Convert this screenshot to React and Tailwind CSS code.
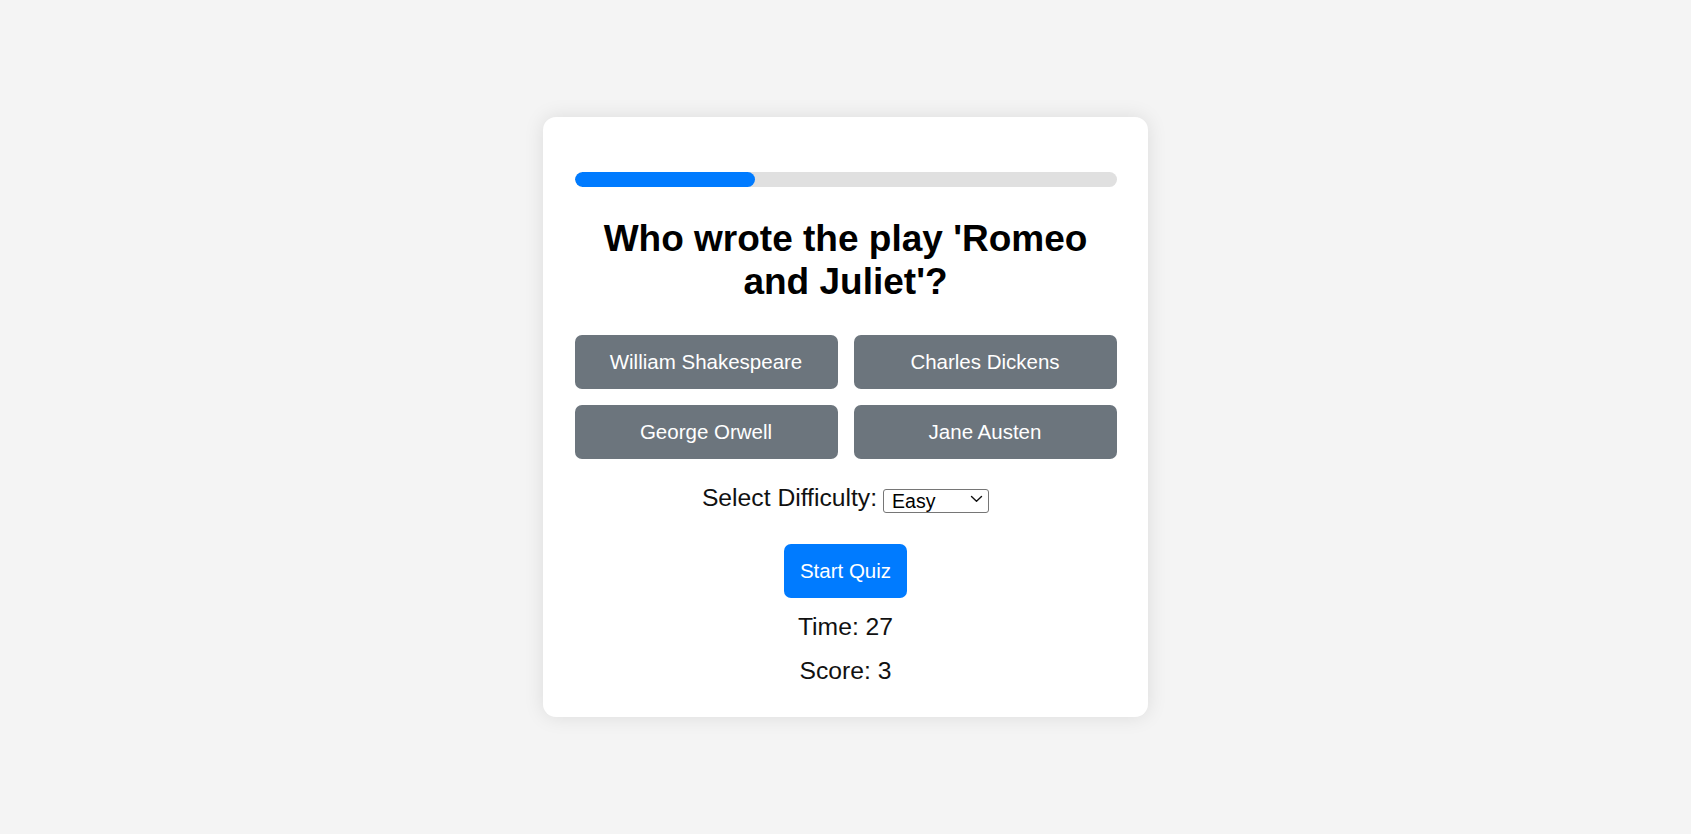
import React from "react";

export default function App() {
  const answers = ["William Shakespeare", "Charles Dickens", "George Orwell", "Jane Austen"];
  return (
    <div
      className="min-h-screen w-full bg-[#f4f4f4] flex items-center justify-center"
      style={{ fontFamily: '"Liberation Sans", Arial, Helvetica, sans-serif' }}
    >
      <div className="w-[605px] bg-white rounded-[13px] shadow-[0_0_20px_rgba(0,0,0,0.1)] px-[31.5px] pt-[55px] pb-[31px] flex flex-col">
        <div className="h-[15px] w-full rounded-full bg-[#e0e0e0] overflow-hidden">
          <div className="h-full w-1/3 rounded-full bg-[#007bff]" />
        </div>
        <h2 className="mt-[31px] text-center text-[37px] leading-[42.5px] font-bold text-black">
          Who wrote the play 'Romeo and Juliet'?
        </h2>
        <div className="mt-[32px] grid grid-cols-2 gap-4">
          {answers.map((a) => (
            <button
              key={a}
              className="h-[54px] rounded-[7px] bg-[#6c757d] text-white text-[20.5px] leading-[24px]"
            >
              {a}
            </button>
          ))}
        </div>
        <div className="mt-[25px] flex items-center justify-center h-[28.4px] text-[24.7px] leading-[28.4px] text-[#111]">
          <span>Select Difficulty:</span>
          <div className="relative ml-[6px] w-[106px] h-[24.5px]">
            <select
              defaultValue="Easy"
              className="appearance-none w-full h-full border border-[#767676] rounded-[3px] bg-white pl-[8px] text-[19.5px] leading-[22px] text-black outline-none"
              style={{ fontFamily: '"Liberation Sans", Arial, sans-serif' }}
            >
              <option>Easy</option>
              <option>Medium</option>
              <option>Hard</option>
            </select>
            <svg
              className="pointer-events-none absolute right-[6px] top-[9px]"
              width="13"
              height="8"
              viewBox="0 0 13 8"
              fill="none"
            >
              <path d="M1.5 1.5 L6.5 6.2 L11.5 1.5" stroke="#111" strokeWidth="1.4" strokeLinecap="round" strokeLinejoin="round" />
            </svg>
          </div>
        </div>
        <div className="mt-[32px] flex justify-center">
          <button className="h-[54px] px-[15.5px] rounded-[7px] bg-[#007bff] text-white text-[20.5px] leading-[24px]">
            Start Quiz
          </button>
        </div>
        <p className="mt-[15px] text-center text-[24.7px] leading-[28.4px] text-[#111]">Time: 27</p>
        <p className="mt-[15.6px] text-center text-[24.7px] leading-[28.4px] text-[#111]">Score: 3</p>
      </div>
    </div>
  );
}
